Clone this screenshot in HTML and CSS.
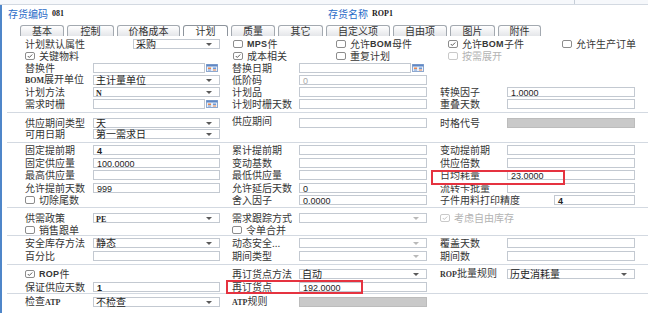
FILE: index.html
```html
<!DOCTYPE html>
<html lang="zh-CN">
<head>
<meta charset="utf-8">
<title>存货档案 - 计划</title>
<link rel="stylesheet" href="styles.css">
</head>
<body>
<div class="top"><div class="top-a"></div><div class="top-b"></div></div>
<div class="frame">
  <div class="head">
    <div class="hg"><span class="hl">存货编码</span><span class="hv">081</span></div>
    <div class="hg"><span class="hl">存货名称</span><span class="hv">ROP1</span></div>
  </div>
  <div class="tabs">
    <span class="tab">基本</span><span class="tab">控制</span><span class="tab">价格成本</span><span class="tab active">计划</span><span class="tab">质量</span><span class="tab">其它</span><span class="tab">自定义项</span><span class="tab">自由项</span><span class="tab">图片</span><span class="tab">附件</span>
  </div>

  <div class="sec s1">
    <div class="frow">
      <span class="lb w108">计划默认属性</span>
      <span class="in sel w87">采购</span>
      <span class="sp13"></span>
      <span class="cb w103"><span class="box"></span><span class="lat">MPS</span>件</span>
      <span class="cb w112"><span class="box"></span>允许<span class="lat">BOM</span>母件</span>
      <span class="cb w114"><span class="box"><svg viewBox="0 0 10 8"><path d="M2 4 L4 6 L8 2"/></svg></span>允许<span class="lat">BOM</span>子件</span>
      <span class="cb"><span class="box"></span>允许生产订单</span>
    </div>
    <div class="frow">
      <span class="cb w208"><span class="box"><svg viewBox="0 0 10 8"><path d="M2 4 L4 6 L8 2"/></svg></span>关键物料</span>
      <span class="cb w103"><span class="box"><svg viewBox="0 0 10 8"><path d="M2 4 L4 6 L8 2"/></svg></span>成本相关</span>
      <span class="cb w112"><span class="box"></span>重复计划</span>
      <span class="cb dis"><span class="box"></span>按需展开</span>
    </div>
    <div class="row">
      <span class="lb">替换件</span>
      <span class="wc"><span class="in"></span><svg class="cal" viewBox="0 0 12 8"><rect x="0.5" y="0.5" width="11" height="7" fill="#eaf0f8" stroke="#8ea8cf"/><rect x="0.5" y="0.5" width="11" height="2" fill="#5f88c6"/><rect x="2" y="3.5" width="3" height="1.5" fill="#e8864e"/><rect x="7" y="3.5" width="3" height="1.5" fill="#6b98d8"/><rect x="2" y="5.5" width="3" height="1" fill="#6b98d8"/><rect x="7" y="5.5" width="3" height="1" fill="#e8864e"/></svg></span>
      <span class="lb c3">替换日期</span>
      <span class="wc"><span class="in"></span><svg class="cal" viewBox="0 0 12 8"><rect x="0.5" y="0.5" width="11" height="7" fill="#eaf0f8" stroke="#8ea8cf"/><rect x="0.5" y="0.5" width="11" height="2" fill="#5f88c6"/><rect x="2" y="3.5" width="3" height="1.5" fill="#e8864e"/><rect x="7" y="3.5" width="3" height="1.5" fill="#6b98d8"/><rect x="2" y="5.5" width="3" height="1" fill="#6b98d8"/><rect x="7" y="5.5" width="3" height="1" fill="#e8864e"/></svg></span>
    </div>
    <div class="row">
      <span class="lb"><span class="ser">BOM</span>展开单位</span>
      <span class="in sel">主计量单位</span>
      <span class="lb c3">低阶码</span>
      <span class="in"><span class="num grey">0</span></span>
    </div>
    <div class="row">
      <span class="lb">计划方法</span>
      <span class="in sel"><span class="ser">N</span></span>
      <span class="lb c3">计划品</span>
      <span class="in"></span>
      <span class="lb c5">转换因子</span>
      <span class="in"><span class="num">1.0000</span></span>
    </div>
    <div class="row">
      <span class="lb">需求时栅</span>
      <span class="wc"><span class="in"></span><svg class="cal" viewBox="0 0 12 8"><rect x="0.5" y="0.5" width="11" height="7" fill="#eaf0f8" stroke="#8ea8cf"/><rect x="0.5" y="0.5" width="11" height="2" fill="#5f88c6"/><rect x="2" y="3.5" width="3" height="1.5" fill="#e8864e"/><rect x="7" y="3.5" width="3" height="1.5" fill="#6b98d8"/><rect x="2" y="5.5" width="3" height="1" fill="#6b98d8"/><rect x="7" y="5.5" width="3" height="1" fill="#e8864e"/></svg></span>
      <span class="lb c3">计划时栅天数</span>
      <span class="in"></span>
      <span class="lb c5">重叠天数</span>
      <span class="in"></span>
    </div>
  </div>

  <div class="sec s2">
    <div class="row">
      <span class="lb">供应期间类型</span>
      <span class="in sel">天</span>
      <span class="lb c3 up">供应期间</span>
      <span class="in"></span>
      <span class="lb c5">时格代号</span>
      <span class="in off"></span>
    </div>
    <div class="row">
      <span class="lb">可用日期</span>
      <span class="in sel">第一需求日</span>
    </div>
  </div>

  <div class="sec s3">
    <div class="row">
      <span class="lb">固定提前期</span>
      <span class="in"><span class="num b">4</span></span>
      <span class="lb c3">累计提前期</span>
      <span class="in"></span>
      <span class="lb c5">变动提前期</span>
      <span class="in"></span>
    </div>
    <div class="row">
      <span class="lb">固定供应量</span>
      <span class="in"><span class="num">100.0000</span></span>
      <span class="lb c3">变动基数</span>
      <span class="in"></span>
      <span class="lb c5">供应倍数</span>
      <span class="in"></span>
    </div>
    <div class="row">
      <span class="lb">最高供应量</span>
      <span class="in"></span>
      <span class="lb c3">最低供应量</span>
      <span class="in"></span>
      <span class="lb c5">日均耗量</span>
      <span class="in"><span class="num">23.0000</span></span>
    </div>
    <div class="row">
      <span class="lb">允许提前天数</span>
      <span class="in"><span class="num">999</span></span>
      <span class="lb c3">允许延后天数</span>
      <span class="in"><span class="num">0</span></span>
      <span class="lb c5">流转卡批量</span>
      <span class="in"></span>
    </div>
    <div class="row">
      <span class="cb span2"><span class="box"></span>切除尾数</span>
      <span class="lb c3">舍入因子</span>
      <span class="in"><span class="num">0.0000</span></span>
      <span class="pair span2"><span class="lb c5">子件用料打印精度</span><span class="in w81"><span class="num b">4</span></span></span>
    </div>
  </div>

  <div class="sec s4">
    <div class="row">
      <span class="lb">供需政策</span>
      <span class="in sel"><span class="ser">PE</span></span>
      <span class="lb c3">需求跟踪方式</span>
      <span class="in sel lt"></span>
      <span class="cb dis span2 c5"><span class="box"><svg viewBox="0 0 10 8"><path d="M2 4 L4 6 L8 2"/></svg></span>考虑自由库存</span>
    </div>
    <div class="row r11">
      <span class="cb span2"><span class="box"></span>销售跟单</span>
      <span class="cb span2 c3"><span class="box"></span>令单合并</span>
    </div>
  </div>

  <div class="sec s5">
    <div class="row r13">
      <span class="lb">安全库存方法</span>
      <span class="in sel">静态</span>
      <span class="lb c3">动态安全...</span>
      <span class="in sel lt"></span>
      <span class="lb c5">覆盖天数</span>
      <span class="in"></span>
    </div>
    <div class="row r13">
      <span class="lb">百分比</span>
      <span class="in"></span>
      <span class="lb c3">期间类型</span>
      <span class="in sel lt"></span>
      <span class="lb c5">期间数</span>
      <span class="in"></span>
    </div>
  </div>

  <div class="sec s6">
    <div class="row r13">
      <span class="cb span2"><span class="box"><svg viewBox="0 0 10 8"><path d="M2 4 L4 6 L8 2"/></svg></span><span class="lat">ROP</span>件</span>
      <span class="lb c3">再订货点方法</span>
      <span class="in sel">自动</span>
      <span class="lb c5"><span class="ser">ROP</span>批量规则</span>
      <span class="in sel">历史消耗量</span>
    </div>
    <div class="row r13">
      <span class="lb">保证供应天数</span>
      <span class="in"><span class="num b">1</span></span>
      <span class="lb c3">再订货点</span>
      <span class="in"><span class="num">192.0000</span></span>
    </div>
  </div>

  <div class="sec s7">
    <div class="row r13">
      <span class="lb">检查<span class="ser">ATP</span></span>
      <span class="in sel">不检查</span>
      <span class="lb c3"><span class="ser">ATP</span>规则</span>
      <span class="in off"></span>
    </div>
  </div>
</div>
<div class="mark m1"></div>
<div class="mark m2"></div>
</body>
</html>
```
FILE: styles.css
```css
* { box-sizing: border-box; }
html, body { margin: 0; padding: 0; }
body {
  width: 648px;
  height: 313px;
  overflow: hidden;
  position: relative;
  background: #fff;
  font-family: "Noto Sans CJK SC", "Noto Sans", sans-serif;
  font-size: 10px;
  color: #363636;
}
.top { display: flex; height: 5px; border-bottom: 1px solid #d3d9e1; background: #f6f8fb; }
.top-a { width: 575px; border-right: 1px solid #c6ced8; }
.top-b { flex: 1; }
.frame { border-left: 2px solid #4f86c9; height: 308px; }

.head { display: flex; height: 18px; align-items: center; padding-left: 6px; line-height: 10px; }
.hg { width: 323px; display: flex; align-items: center; }
.hl { color: #2a6cc8; margin-right: 4px; }
.hv { font-family: "Liberation Serif", serif; font-size: 8px; font-weight: bold; color: #222; }

.tabs { display: flex; height: 11px; margin-top: 2px; padding-left: 18px; align-items: flex-end; }
.tab {
  height: 11px; margin-right: 3px;
  border: 1px solid #a3a9b0; border-bottom: 0;
  border-radius: 3px 3px 0 0;
  background: linear-gradient(#ffffff, #e4e6e9);
  text-align: center; line-height: 10px; color: #333;
}
.tab.active { background: #fff; border-color: #8d949c; }
.tab:nth-child(1) { width: 44px; }
.tab:nth-child(2) { width: 47px; }
.tab:nth-child(3) { width: 63px; }
.tab:nth-child(4) { width: 45px; }
.tab:nth-child(5) { width: 44px; }
.tab:nth-child(6) { width: 45px; }
.tab:nth-child(7) { width: 64px; }
.tab:nth-child(8) { width: 54px; }
.tab:nth-child(9) { width: 45px; }
.tab:nth-child(10) { width: 43px; }

.sec { margin-left: 5px; border-bottom: 1px solid #d3d9e1; }
.sec.s7 { border-bottom: 0; }
.s1 { padding: 2px 0 2px; }
.s2 { padding: 4px 0 3px; }
.s2 .row { height: 11px; }
.s3 { padding: 1px 0 0.5px; }
.s3 .row { height: 12.5px; }
.s4 { padding: 3px 0 0; }
.s4 .row { height: 13px; }
.s4 .row.r11 { height: 11px; }
.s5 { padding: 0 0 2px; }
.s6 { padding: 2px 0 0; }
.s7 { padding: 1px 0 0; }
.r13 { height: 13px !important; }

.frow { display: flex; height: 12px; align-items: center; padding-left: 18px; line-height: 10px; }
.row {
  display: grid;
  grid-template-columns: 68px 127px 79px 128px 80px 128px;
  height: 12px;
  align-items: center;
  padding-left: 18px;
  line-height: 10px;
}
.lb { white-space: nowrap; }
.lb.up { position: relative; top: -2px; }
.c3 { padding-left: 12px; }
.c5 { padding-left: 13px; }
.span2 { grid-column: span 2; }
.w108 { width: 108px; }
.w87 { width: 87px; }
.sp13 { width: 13px; }
.w103 { width: 103px; }
.w112 { width: 112px; }
.w114 { width: 114px; }
.w208 { width: 208px; }
.w81 { width: 81px; }

.in {
  display: block; position: relative;
  height: 10px;
  border: 1px solid #c3c9d1;
  background: #fff;
  padding-left: 2px;
  line-height: 8px;
  white-space: nowrap;
  color: #1e1e1e;
}
.in.off { background: #c9c9c9; border-color: #bcbcbc; }
.sel::after {
  content: ""; position: absolute; right: 7px; top: 3px;
  border-left: 3px solid transparent; border-right: 3px solid transparent;
  border-top: 3px solid #5a5a5a;
}
.sel.lt::after { border-top-color: #b9b9b9; }
.wc { display: flex; align-items: center; gap: 1px; }
.wc .in { width: 112px; }
.cal { width: 12px; height: 8px; display: block; }
.pair { display: flex; justify-content: space-between; align-items: center; padding-left: 0; }

.num { font-family: "Liberation Sans", Arial, sans-serif; font-size: 9px; padding-left: 1px; }
.num.b { font-weight: bold; }
.grey { color: #a8a8a8; }
.ser { font-family: "Liberation Serif", serif; font-weight: bold; font-size: 8px; }
.lat { font-family: "Liberation Sans", Arial, sans-serif; font-size: 9px; font-weight: bold; letter-spacing: 0.3px; }

.cb { display: flex; align-items: center; white-space: nowrap; }
.box {
  width: 10px; height: 8px; margin-right: 4px;
  border: 1px solid #8c8c8c; border-radius: 2px; background: #fff;
  display: flex; align-items: center; justify-content: center;
}
.box svg { width: 8px; height: 6px; display: block; }
.box path { fill: none; stroke: #4a4a4a; stroke-width: 1.2; }
.cb.dis { color: #b3b3b3; }
.cb.dis .box { border-color: #c9c9c9; }
.cb.dis .box path { stroke: #bdbdbd; }

.mark { position: absolute; border: 2px solid #e53340; }
.m1 { left: 431px; top: 170px; width: 134px; height: 15px; }
.m2 { left: 226px; top: 280px; width: 137px; height: 14px; }
```
